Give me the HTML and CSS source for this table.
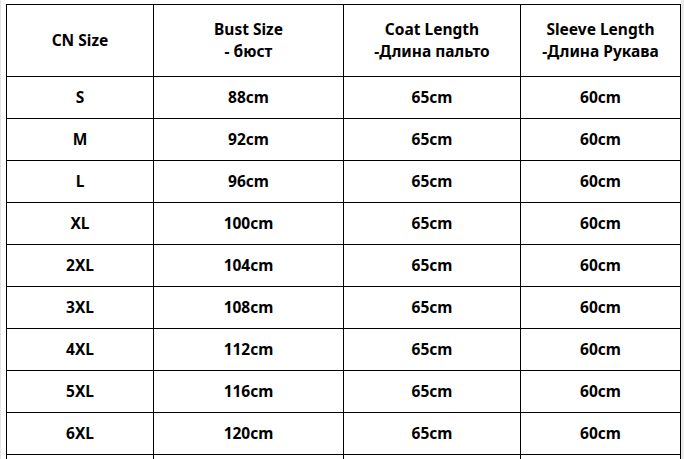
FILE: index.html
```html
<!DOCTYPE html>
<html>
<head>
<meta charset="utf-8">
<link rel="stylesheet" href="styles.css">
</head>
<body>
<div class="page">
  <div class="size-table">
    <div class="cell head">CN Size</div>
    <div class="cell head">Bust Size<br>- бюст</div>
    <div class="cell head">Coat Length<br>-Длина пальто</div>
    <div class="cell head">Sleeve Length<br>-Длина Рукава</div>

    <div class="cell">S</div><div class="cell">88cm</div><div class="cell">65cm</div><div class="cell">60cm</div>
    <div class="cell">M</div><div class="cell">92cm</div><div class="cell">65cm</div><div class="cell">60cm</div>
    <div class="cell">L</div><div class="cell">96cm</div><div class="cell">65cm</div><div class="cell">60cm</div>
    <div class="cell">XL</div><div class="cell">100cm</div><div class="cell">65cm</div><div class="cell">60cm</div>
    <div class="cell">2XL</div><div class="cell">104cm</div><div class="cell">65cm</div><div class="cell">60cm</div>
    <div class="cell">3XL</div><div class="cell">108cm</div><div class="cell">65cm</div><div class="cell">60cm</div>
    <div class="cell">4XL</div><div class="cell">112cm</div><div class="cell">65cm</div><div class="cell">60cm</div>
    <div class="cell">5XL</div><div class="cell">116cm</div><div class="cell">65cm</div><div class="cell">60cm</div>
    <div class="cell">6XL</div><div class="cell">120cm</div><div class="cell">65cm</div><div class="cell">60cm</div>
    <div class="cell">&nbsp;</div><div class="cell">&nbsp;</div><div class="cell">&nbsp;</div><div class="cell">&nbsp;</div>
  </div>
</div>
</body>
</html>
```

FILE: styles.css
```css
html, body {
  margin: 0;
  padding: 0;
  background: #fff;
  overflow: hidden;
}
.page {
  width: 684px;
  height: 459px;
  overflow: hidden;
  padding: 4px 0 0 6px;
  box-sizing: border-box;
  font-family: "Noto Sans", "Liberation Sans", sans-serif;
  font-weight: 700;
  font-size: 15.5px;
  color: #000;
  border-left: 1px solid #e4e4e4;
  border-right: 3px solid #ececec;
}
.size-table {
  display: grid;
  grid-template-columns: 146px 189px 176px 159px;
  grid-template-rows: 71px repeat(10, 41px);
  gap: 1px;
  background: #000;
  border: 1px solid #000;
  width: max-content;
  margin-left: -1px;
}
.cell {
  background: #fff;
  display: flex;
  align-items: center;
  justify-content: center;
  text-align: center;
  line-height: 22px;
  padding-bottom: 1px;
}
```
